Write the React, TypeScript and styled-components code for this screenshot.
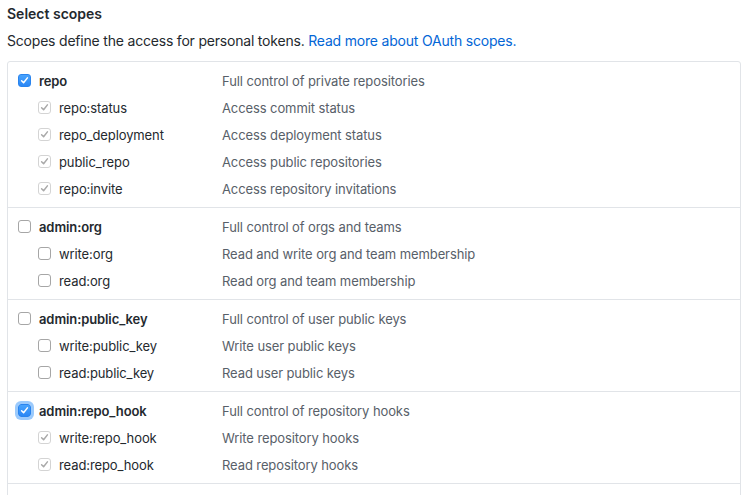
import React from "react";
import styled, { createGlobalStyle } from "styled-components";

const Global = createGlobalStyle`
  html, body {
    margin: 0;
    padding: 0;
    background: #ffffff;
    overflow: hidden;
  }
  body {
    font-family: Inter, "Liberation Sans", Arial, sans-serif;
    font-size: 14px;
    color: #24292e;
  }
`;

const Page = styled.div`
  padding: 3px 8px 0 7px;
`;

const Title = styled.h3`
  margin: 0;
  font-size: 14px;
  font-weight: 600;
  line-height: 21px;
  color: #24292e;
`;

const Note = styled.p`
  margin: 6px 0 10px;
  font-size: 14px;
  line-height: 21px;
  letter-spacing: -0.2px;
  color: #24292e;
`;

const Link = styled.a`
  color: #0366d6;
  text-decoration: none;
`;

const Box = styled.div`
  border: 1px solid #e1e4e8;
  border-radius: 3px;
  width: 732px;
`;

const Section = styled.div`
  padding: 5px 0;
  min-height: 12px;
  & + & {
    border-top: 1px solid #e1e4e8;
  }
`;

const Row = styled.label`
  display: grid;
  grid-template-columns: 204px 1fr;
  height: 27px;
  align-items: center;
  padding-left: 10px;
  font-size: 13px;
  letter-spacing: -0.1px;
`;

const NameCell = styled.span<{ $child?: boolean }>`
  display: flex;
  align-items: center;
  gap: 8px;
  padding-left: ${(p) => (p.$child ? "20px" : "0")};
  font-weight: ${(p) => (p.$child ? 400 : 600)};
  color: #24292e;
`;

const Desc = styled.span`
  color: #586069;
`;

type BoxKind = "on" | "off" | "inherit";

const Check = styled.span<{ $kind: BoxKind; $focus?: boolean }>`
  flex: none;
  width: 13px;
  height: 13px;
  box-sizing: border-box;
  border-radius: 3px;
  display: inline-flex;
  align-items: center;
  justify-content: center;
  background: ${(p) =>
    p.$kind === "on" ? "linear-gradient(#48a3fd, #2a87f5)" : "#ffffff"};
  border: 1px solid
    ${(p) =>
      p.$kind === "on" ? "#2a84ee" : p.$kind === "inherit" ? "#d4d4d4" : "#a6a6a6"};
  box-shadow: ${(p) =>
    p.$focus ? "0 0 0 3px rgba(72, 158, 250, 0.55)" : "none"};
  color: ${(p) => (p.$kind === "on" ? "#ffffff" : "#a9a9a9")};
`;

const Tick = () => (
  <svg width="9" height="9" viewBox="0 0 9 9" aria-hidden>
    <path
      d="M1.6 4.7 L3.6 6.8 L7.4 1.9"
      fill="none"
      stroke="currentColor"
      strokeWidth="1.5"
      strokeLinecap="round"
      strokeLinejoin="round"
    />
  </svg>
);

type Scope = { name: string; desc: string };
type Group = Scope & { checked: boolean; focus?: boolean; children: Scope[] };

const groups: Group[] = [
  {
    name: "repo",
    desc: "Full control of private repositories",
    checked: true,
    children: [
      { name: "repo:status", desc: "Access commit status" },
      { name: "repo_deployment", desc: "Access deployment status" },
      { name: "public_repo", desc: "Access public repositories" },
      { name: "repo:invite", desc: "Access repository invitations" },
    ],
  },
  {
    name: "admin:org",
    desc: "Full control of orgs and teams",
    checked: false,
    children: [
      { name: "write:org", desc: "Read and write org and team membership" },
      { name: "read:org", desc: "Read org and team membership" },
    ],
  },
  {
    name: "admin:public_key",
    desc: "Full control of user public keys",
    checked: false,
    children: [
      { name: "write:public_key", desc: "Write user public keys" },
      { name: "read:public_key", desc: "Read user public keys" },
    ],
  },
  {
    name: "admin:repo_hook",
    desc: "Full control of repository hooks",
    checked: true,
    focus: true,
    children: [
      { name: "write:repo_hook", desc: "Write repository hooks" },
      { name: "read:repo_hook", desc: "Read repository hooks" },
    ],
  },
];

const App = () => (
  <Page>
    <Global />
    <Title>Select scopes</Title>
    <Note>
      Scopes define the access for personal tokens.{" "}
      <Link href="#">Read more about OAuth scopes.</Link>
    </Note>
    <Box>
      {groups.map((g) => (
        <Section key={g.name}>
          <Row>
            <NameCell>
              <Check $kind={g.checked ? "on" : "off"} $focus={g.focus}>
                {g.checked && <Tick />}
              </Check>
              {g.name}
            </NameCell>
            <Desc>{g.desc}</Desc>
          </Row>
          {g.children.map((c) => (
            <Row key={c.name}>
              <NameCell $child>
                <Check $kind={g.checked ? "inherit" : "off"}>
                  {g.checked && <Tick />}
                </Check>
                {c.name}
              </NameCell>
              <Desc>{c.desc}</Desc>
            </Row>
          ))}
        </Section>
      ))}
      {/* next group starts below the fold */}
      <Section />
    </Box>
  </Page>
);

export default App;
